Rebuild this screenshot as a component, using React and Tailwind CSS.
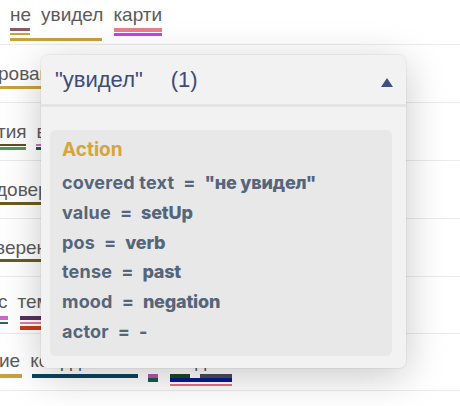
import React from 'react';

const gold = 'bg-[#c9a13d]';

// background annotation rows, each bar written as a full class string
const rows = [
  {
    box: 'h-[45px] pt-[4px]',
    words: [
      { t: 'не', cls: 'ml-[10px]' },
      { t: 'увидел', cls: '' },
      { t: 'карти', cls: '' },
    ],
    lines: [
      { cls: 'mt-[2px] h-[5px]', bars: ['ml-[10px] w-[20px] h-[3px] bg-[#8a5b63]', 'ml-[84px] w-[48px] h-[4px] bg-[#e87f8b]'] },
      { cls: 'h-[5px]', bars: [`ml-[10px] w-[20px] h-[2px] ${gold}`, 'ml-[84px] w-[48px] h-[3px] bg-[#cc3cf0]'] },
      { cls: 'h-[3px]', bars: [`ml-[10px] w-[92px] h-[3px] ${gold}`] },
    ],
  },
  {
    box: 'h-[58px] pt-[18px]',
    words: [{ t: 'рования', cls: '-ml-[2px]' }],
    lines: [{ cls: 'mt-[1px] h-[3px]', bars: [`w-[60px] h-[3px] ${gold}`] }],
  },
  {
    box: 'h-[58px] pt-[18px]',
    words: [
      { t: 'тия', cls: '-ml-[3px]' },
      { t: 'в', cls: '' },
    ],
    lines: [
      { cls: 'mt-[1px] h-[3px]', bars: ['w-[26px] h-[2px] bg-[#5f4f22]', 'ml-[10px] w-[20px] h-[2px] bg-[#c46fc0]'] },
      { cls: 'h-[3px]', bars: ['w-[26px] h-[3px] bg-[#4f9a57]', 'ml-[10px] w-[20px] h-[3px] bg-[#1d5a48]'] },
    ],
  },
  {
    box: 'h-[58px] pt-[18px]',
    words: [{ t: 'доверие', cls: '-ml-[4px]' }],
    lines: [{ cls: 'mt-[1px] h-[3px]', bars: ['w-[60px] h-[3px] bg-[#6b5c1d]'] }],
  },
  {
    box: 'h-[58px] pt-[18px]',
    words: [{ t: 'веренность', cls: '-ml-[5px]' }],
    lines: [{ cls: 'h-[3px]', bars: ['w-[60px] h-[3px] bg-[#6b5c1d]'] }],
  },
  {
    box: 'h-[57px] pt-[14px]',
    words: [
      { t: 'с', cls: '-ml-[2px]' },
      { t: 'тем', cls: '' },
    ],
    lines: [
      { cls: 'mt-[3px] h-[6px]', bars: ['w-[8px] h-[4px] bg-[#cc66cc]', 'ml-[12px] w-[40px] h-[4px] bg-[#5a2f5e]'] },
      { cls: 'h-[4px]', bars: ['w-[8px] h-[2px] bg-[#2a6a50]', 'ml-[12px] w-[40px] h-[2px] bg-[#e07f90]'] },
      { cls: 'h-[4px]', bars: ['ml-[20px] w-[40px] h-[4px] bg-[#c23f1f]'] },
    ],
  },
  {
    box: 'h-[57px] pt-[16px]',
    words: [
      { t: 'ие', cls: '-ml-[1px]' },
      { t: 'координаты', cls: '' },
      { t: 'с', cls: '' },
      { t: 'не', cls: '' },
      { t: 'дом', cls: '' },
    ],
    lines: [
      {
        cls: 'mt-[2px] h-[4px]',
        bars: [
          `w-[22px] h-[4px] ${gold}`,
          'ml-[10px] w-[106px] h-[4px] bg-[#0b4560]',
          'ml-[10px] w-[10px] h-[4px] bg-[#b555a8]',
          'ml-[12px] w-[20px] h-[4px] bg-[#1a4a22]',
          'ml-[10px] w-[32px] h-[4px] bg-[#474b5e]',
        ],
      },
      { cls: 'h-[6px]', bars: ['ml-[148px] w-[10px] h-[4px] bg-[#1b5a4c]', 'ml-[12px] w-[62px] h-[4px] bg-[#0c1a8c]'] },
      { cls: 'h-[2px]', bars: ['ml-[170px] w-[62px] h-[2px] bg-[#e07585]'] },
    ],
  },
];

const fields = [
  ['covered text', '"не увидел"'],
  ['value', 'setUp'],
  ['pos', 'verb'],
  ['tense', 'past'],
  ['mood', 'negation'],
  ['actor', '-'],
];

const Row = ({ row }) => (
  <div className={`${row.box} border-b border-[#ebebeb] overflow-hidden`}>
    <div className="flex gap-[10px] h-[22px] leading-[22px] text-[19px] text-[#5a5a5a] whitespace-nowrap">
      {row.words.map((w, i) => (
        <span key={i} className={w.cls}>{w.t}</span>
      ))}
    </div>
    {row.lines.map((line, i) => (
      <div key={i} className={`flex items-start ${line.cls}`}>
        {line.bars.map((b, j) => (
          <div key={j} className={`shrink-0 ${b}`} />
        ))}
      </div>
    ))}
  </div>
);

const App = () => {
  return (
    <div className="relative w-[460px] h-[406px] overflow-hidden bg-white font-['Liberation_Sans',Arial,sans-serif]">
      {rows.map((row, i) => (
        <Row key={i} row={row} />
      ))}

      {/* Всплывающая карточка аннотации */}
      <div className="absolute left-[41px] top-[55px] w-[365px] h-[313px] flex flex-col rounded-[7px] bg-[#f2f2f2] shadow-[0_8px_40px_rgba(0,0,0,0.22),0_0_0_1px_rgba(0,0,0,0.04)]">
        <div className="h-[49px] flex items-center justify-between pl-[14px] pr-[13px] text-[22px] leading-none text-[#3d4a7a]">
          <span className="whitespace-nowrap">
            "увидел"<span className="ml-[28px]">(1)</span>
          </span>
          <svg width="12" height="9" viewBox="0 0 12 9" className="mt-[5px]">
            <path d="M6 0L12 9H0Z" fill="#3f5080" />
          </svg>
        </div>
        <div className="h-[3px] bg-[#e4e4e4]" />
        <div className="flex-1 pt-[23px] pl-[9px] pr-[14px] pb-[12px]">
          <div className="h-full rounded-[6px] bg-[#e8e8e8] pl-[12px] pt-[8px] font-['Inter',sans-serif]">
            <div className="text-[19px] leading-[23px] font-bold text-[#d4a53b]">Action</div>
            <div className="mt-[7px]">
              {fields.map(([k, v]) => (
                <div key={k} className="flex h-[29.8px] leading-[29.8px] text-[18px] text-[#55657a] whitespace-nowrap">
                  <span className="font-bold tracking-[0.2px]">{k}</span>
                  <span className="mx-[9px] font-bold">=</span>
                  <span className="font-extrabold tracking-[-0.2px]">{v}</span>
                </div>
              ))}
            </div>
          </div>
        </div>
      </div>
    </div>
  );
};

export default App;
